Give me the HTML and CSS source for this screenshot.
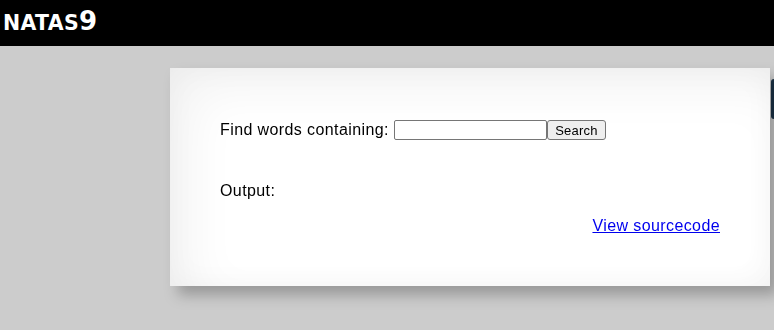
FILE: index.html
```html
<!DOCTYPE html>
<html lang="en">

<head>
    <meta charset="UTF-8">
    <meta name="viewport" content="width=device-width, initial-scale=1.0">
    <title>natas9</title>
    <link rel="stylesheet" href="styles.css">
</head>

<body>
    <h1 class="title">NATAS<span class="level">9</span></h1>
    <div class="wechall"></div>
    <div class="content">
        <form class="search">
            <span>Find words containing:</span>
            <input class="needle" type="text" name="needle"><button class="submit" type="button">Search</button>
        </form>
        <div class="output">Output:</div>
        <div class="viewsource"><a href="#">View sourcecode</a></div>
    </div>
</body>

</html>
```

FILE: styles.css
```css
* {
    margin: 0;
    padding: 0;
    box-sizing: border-box;
}

html,
body {
    height: 100%;
}

body {
    background: #cccccc;
    font-family: "Liberation Sans", Arial, sans-serif;
    font-size: 16px;
    color: #000;
}

.title {
    background: #000;
    color: #fff;
    height: 46px;
    padding: 6px 3px 0;
    font-family: "DejaVu Sans", Verdana, sans-serif;
    font-size: 20.5px;
    line-height: 30px;
    font-weight: bold;
    letter-spacing: 0.3px;
}

.title .level {
    font-size: 26px;
    letter-spacing: 0;
}

.wechall {
    position: absolute;
    top: 79px;
    left: 771px;
    width: 3px;
    height: 40px;
    border-radius: 3px 0 0 3px;
    background: #1c3348;
}

.content {
    width: 600px;
    height: 218px;
    margin: 22px 0 0 170px;
    padding: 50px;
    background: #fff;
    box-shadow: inset 20px 20px 50px rgba(0, 0, 0, 0.05), inset 0 0 30px rgba(0, 0, 0, 0.04);
    filter: drop-shadow(8px 9px 7px rgba(0, 0, 0, 0.25));
    display: flex;
    flex-direction: column;
    letter-spacing: 0.4px;
}

.search {
    display: flex;
    align-items: center;
    height: 24px;
}

.search span {
    margin-right: 5px;
}

.needle {
    width: 153px;
    height: 20px;
    border: 1px solid #767676;
    border-radius: 2px;
    font-size: 13px;
}

.submit {
    width: 59px;
    height: 20px;
    border: 1px solid #767676;
    border-radius: 3px;
    background: #efefef;
    font-family: "Liberation Sans", Arial, sans-serif;
    font-size: 13px;
    letter-spacing: 0.2px;
    color: #000;
}

.output {
    margin-top: 40px;
    line-height: 18px;
}

.viewsource {
    margin-top: 17px;
    text-align: right;
    line-height: 18px;
}

.viewsource a {
    color: #0000ee;
    text-decoration: underline;
}
```
